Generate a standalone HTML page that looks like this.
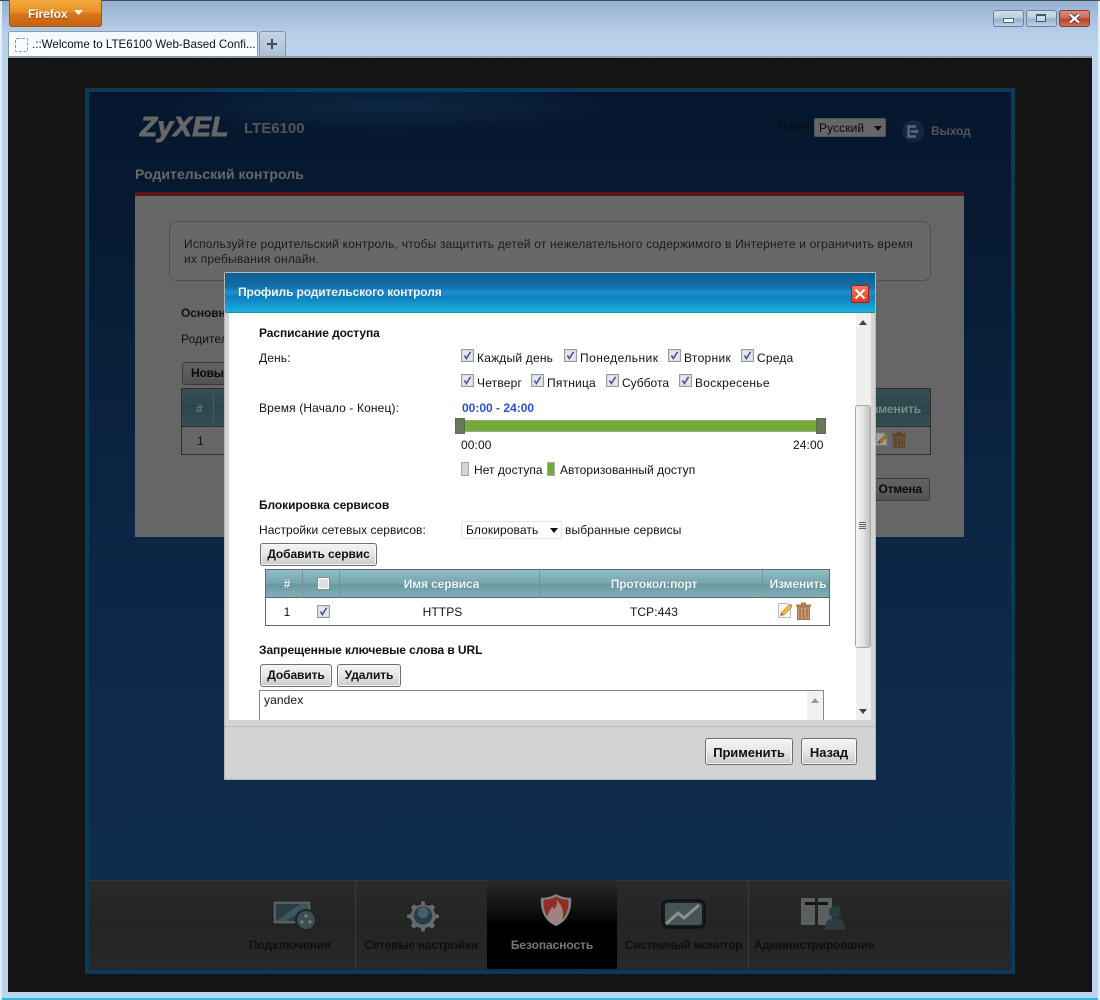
<!DOCTYPE html>
<html lang="ru"><head><meta charset="utf-8"><title>LTE6100</title>
<style>
html,body{margin:0;padding:0;width:1100px;height:1000px;overflow:hidden}
body{position:relative;background:#b8cfe8;font:12px "Liberation Sans","Noto Sans CJK SC",sans-serif;color:#111;letter-spacing:.1px}
div,span,svg{position:absolute;box-sizing:border-box}
.t{white-space:nowrap;line-height:14px}
.b{font-weight:bold;letter-spacing:-.08px}
.c{text-align:center}
.btn{border:1px solid #6e6e6e;border-radius:3px;background:linear-gradient(#f4f4f4,#e6e6e6 50%,#c9c9c9);font-weight:bold;text-align:center;line-height:21px;color:#111;white-space:nowrap;box-shadow:inset 0 0 0 1px #f6f6f6;letter-spacing:-.08px}
.dbtn{border:1px solid #3a3a3a;border-radius:3px;background:linear-gradient(#626262,#5c5c5c 50%,#525252);font-weight:bold;text-align:center;line-height:21px;color:#0a0a0a;white-space:nowrap;overflow:hidden;letter-spacing:-.2px}
.wb{top:10px;height:17px;width:31px;border:1px solid #6e8097;border-radius:3px;background:linear-gradient(#d0deee,#b9cde2 48%,#96b0cc 52%,#bcd0e5)}
.th{color:#f2f5f5;font-weight:bold;text-align:center;text-shadow:0 0 1px #4a7078;letter-spacing:-.12px}
.nav{color:#0e0e0e;font-weight:bold;text-align:center;letter-spacing:-.22px}
</style></head><body>
<svg width="0" height="0" style="display:none"><defs>
<symbol id="ck" viewBox="0 0 13 13"><rect x=".5" y=".5" width="12" height="12" fill="#d8dbe3" stroke="#9a9a9a"/><rect x="2" y="2" width="9" height="9" fill="#e6e8ee"/><path d="M3.4 6.5l2 3L9.6 2.8" fill="none" stroke="#44569e" stroke-width="1.6"/></symbol>
<symbol id="pen" viewBox="0 0 16 17"><path d="M1.5 1.5h9l3 3v11h-12z" fill="#f6f6f6" stroke="#bdbdbd"/><path d="M3.5 13.5l1-3 8-8 2.4 2.4-8 8z" fill="#f4bf2e" stroke="#b57c15" stroke-width=".6"/><path d="M3.5 13.5l1-3 2.2 2.2z" fill="#c8452b"/><path d="M12.5 2.5l1-1 2 2-1 1.2z" fill="#999"/></symbol>
<symbol id="tr" viewBox="0 0 15 18"><path d="M0 2.5h15v2H0zM5 .5h5v2H5z" fill="#b07a50"/><path d="M1.5 5h12v12.5h-12z" fill="#c99a6f" stroke="#a87249"/><path d="M4 6.5v10M7.5 6.5v10M11 6.5v10" stroke="#9a6a42" stroke-width="1.2"/></symbol>
</defs></svg>

<!-- browser chrome -->
<div style="left:0;top:0;width:1100px;height:58px;background:linear-gradient(#97b1cf,#b9d0ea 60%,#bcd3ec);border-top:1px solid #3d4a58"></div>
<div style="left:0;top:58px;width:8px;height:942px;background:#bcd3ec"></div>
<div style="left:1092px;top:58px;width:8px;height:942px;background:#bcd3ec"></div>
<div style="left:0;top:992px;width:1100px;height:8px;background:#bcd5ef;border-bottom:2px solid #33b8dc"></div>
<div style="left:0;top:1px;width:2px;height:999px;background:#e4eef8"></div>
<div style="left:1098px;top:1px;width:2px;height:999px;background:#e4eef8"></div>

<div style="left:9px;top:0;width:93px;height:27px;border:1px solid #9a5a1c;border-top:0;border-radius:0 0 3px 3px;background:linear-gradient(#f3a93f,#e98f26 45%,#d8741b 55%,#c7610f)"></div>
<div class="t b" style="left:28px;top:7px;color:#fff;font-size:12px;text-shadow:0 1px 1px #8a4a0f">Firefox</div>
<svg style="left:74px;top:10px" width="9" height="5"><path d="M0 0h9L4.5 5z" fill="#fff"/></svg>

<div style="left:8px;top:31px;width:250px;height:28px;background:linear-gradient(#f3f7fb,#fff);border:1px solid #8b9cb0;border-bottom:0;border-radius:3px 3px 0 0"></div>
<div style="left:15px;top:38px;width:13px;height:14px;border:1px dashed #8a8f98;border-radius:2px"></div>
<div class="t" style="left:32px;top:38px;font-size:11.6px;letter-spacing:0;color:#111">.::Welcome to LTE6100 Web-Based Confi...</div>
<div style="left:259px;top:31px;width:27px;height:27px;background:linear-gradient(#c6d5e6,#a9bdd3);border:1px solid #8497ad;border-bottom:0;border-radius:3px 3px 0 0"></div>
<svg style="left:266px;top:38px" width="12" height="12"><path d="M6 1v10M1 6h10" stroke="#3e4a58" stroke-width="2"/></svg>
<div style="left:8px;top:56px;width:1084px;height:2px;background:#8c9bab"></div>

<div class="wb" style="left:993px"></div>
<div style="left:1003px;top:18px;width:11px;height:5px;background:#f2f6fa;border:1px solid #55687d"></div>
<div class="wb" style="left:1026px"></div>
<div style="left:1036px;top:14px;width:10px;height:8px;border:1px solid #44566b;border-top-width:2px;background:#c8d8e8"></div>
<div class="wb" style="left:1059px;border-color:#8c3b33;background:linear-gradient(#dc8f80,#cc6a58 48%,#b93f2d 52%,#d0705c)"></div>
<svg style="left:1068px;top:13px" width="13" height="11"><path d="M2 1.5l9 8M11 1.5l-9 8" stroke="#4b2a28" stroke-width="4"/><path d="M2 1.5l9 8M11 1.5l-9 8" stroke="#fff" stroke-width="2.4"/></svg>

<!-- dark page bg -->
<div style="left:8px;top:58px;width:1084px;height:934px;background-color:#141414;background-image:repeating-linear-gradient(45deg,#181818 0 1px,#121212 1px 3px)"></div>

<!-- router panel -->
<div style="left:85px;top:88px;width:930px;height:886px;border:4px solid #0b3a56;background:linear-gradient(#06172f,#071a32 15%,#0a2340 40%,#0e2b4c 75%,#0f2c4d)"></div>
<div style="left:89px;top:92px;width:800px;height:90px;background:radial-gradient(ellipse 230px 26px at 300px 14px,rgba(40,100,140,.2),rgba(0,0,0,0))"></div>

<div class="t b" style="left:140px;top:109px;font-size:28px;line-height:36px;font-style:italic;color:#666;letter-spacing:.3px;-webkit-text-stroke:1px #666">ZyXEL</div>
<div class="t b" style="left:244px;top:121px;font-size:15px;line-height:16px;color:#555;letter-spacing:0">LTE6100</div>
<div class="t b" style="left:135px;top:167px;font-size:14px;color:#676767;letter-spacing:.05px">Родительский контроль</div>
<div class="t" style="left:778px;top:119px;color:#0c0c0c">Язык:</div>
<div style="left:814px;top:118px;width:72px;height:19px;background:#666;border:1px solid #555;border-radius:2px"></div>
<div class="t" style="left:819px;top:121px;color:#0a0a0a">Русский</div>
<svg style="left:874px;top:126px" width="8" height="5"><path d="M0 0h8L4 5z" fill="#0a0a0a"/></svg>
<div style="left:902px;top:120px;width:22px;height:22px;border-radius:50%;background:#122646"></div>
<svg style="left:907px;top:125px" width="14" height="13"><path d="M9 1.5H1.5v10H9M9 6.5H3.5" fill="none" stroke="#666" stroke-width="2.4"/><path d="M9 4l3 2.5L9 9z" fill="#666"/></svg>
<div class="t b" style="left:931px;top:124px;color:#555">Выход</div>

<!-- grey page -->
<div style="left:135px;top:192px;width:829px;height:345px;background:#666;border-top:4px solid #5d1414"></div>
<div style="left:169px;top:221px;width:762px;height:60px;border:1px solid #505050;border-radius:8px;background:#686868"></div>
<div class="t" style="left:184px;top:237px;color:#1a1a1a;letter-spacing:.19px">Используйте родительский контроль, чтобы защитить детей от нежелательного содержимого в Интернете и ограничить время</div>
<div class="t" style="left:184px;top:252px;color:#1a1a1a;letter-spacing:.2px">их пребывания онлайн.</div>
<div class="t b" style="left:181px;top:306px;color:#111">Основные</div>
<div class="t" style="left:181px;top:332px;color:#111">Родительский</div>
<div class="dbtn" style="left:182px;top:362px;width:60px;height:23px;padding-left:8px;text-align:left">Новый</div>
<div style="left:181px;top:388px;width:750px;height:67px;border:1px solid #2e2e2e"></div>
<div style="left:182px;top:389px;width:748px;height:38px;background:linear-gradient(#365054,#2c464b 50%,#344e52);border-bottom:1px solid #2e2e2e"></div>
<div style="left:213px;top:389px;width:1px;height:38px;background:#555"></div>
<div class="t b" style="left:196px;top:402px;color:#66787b">#</div>
<div class="t" style="left:197px;top:434px;color:#111">1</div>
<div class="t b" style="left:864px;top:402px;color:#7d8a8c">Изменить</div>
<svg style="left:875px;top:431px;filter:brightness(.65)" width="14" height="16"><use href="#pen"/></svg>
<svg style="left:892px;top:431px;filter:brightness(.55)" width="14" height="17"><use href="#tr"/></svg>
<div class="dbtn" style="left:860px;top:478px;width:70px;height:23px;text-align:right;padding-right:7px">Отмена</div>

<!-- nav -->
<div style="left:90px;top:880px;width:920px;height:89px;background:linear-gradient(#2a2a2a,#242424 50%,#282828);border-top:1px solid #363636"></div>
<div style="left:355px;top:880px;width:1px;height:89px;background:#3a3a3a"></div>
<div style="left:748px;top:880px;width:1px;height:89px;background:#3a3a3a"></div>
<div style="left:487px;top:880px;width:130px;height:89px;background:linear-gradient(#2a2a2a,#060606 46%,#000 47%)"></div>

<svg style="left:271px;top:900px;opacity:.8" width="48" height="32"><rect x="2" y="1" width="38" height="23" rx="2" fill="#666e70" stroke="#1c1c1c"/><path d="M5 4h32v17H5z" fill="#28444b"/><path d="M5 21L29 4h8v4L15 21z" fill="#42626a"/><circle cx="35" cy="20" r="11" fill="#1a2426"/><circle cx="35" cy="20" r="9" fill="#47595c"/><circle cx="35" cy="16" r="1.6" fill="#8a9a9c"/><circle cx="31" cy="22" r="1.6" fill="#8a9a9c"/><circle cx="39" cy="22" r="1.6" fill="#8a9a9c"/></svg>
<svg style="left:404px;top:899px;opacity:.8" width="38" height="33" viewBox="0 0 40 36"><path d="M18 2h4l1 4 4 1 3-2 4 4-2 3 2 4 4 1v4l-4 1-2 4 2 3-4 4-3-2-4 1-1 4h-4l-1-4-4-1-3 2-4-4 2-3-2-4-4-1v-4l4-1 2-4-2-3 4-4 3 2 4-1z" fill="#747d80" stroke="#1e1e1e"/><circle cx="20" cy="18" r="10" fill="#2c4450"/><circle cx="20" cy="15" r="6" fill="#4f6f7b"/></svg>
<svg style="left:536px;top:893px" width="40" height="34" viewBox="0 0 36 36"><path d="M18 1c5 3 10 4 16 4 1 13-4 25-16 30C6 30 1 18 2 5c6 0 11-1 16-4z" fill="#7f8587"/><path d="M18 4c4 2 9 3 13 3 1 11-3 21-13 26C8 28 4 18 5 7c4 0 9-1 13-3z" fill="#8f2c25"/><path d="M9 28c-1-6 3-9 5-14 1 3 3 3 4 0 2-3 1-5 0-7 5 4 9 11 7 21-2 3-4 4-7 6-4-1-7-3-9-6z" fill="#9d8481"/></svg>
<svg style="left:661px;top:899px;opacity:.8" width="46" height="30"><rect x="1" y="1" width="43" height="28" rx="6" fill="#0d1d20" stroke="#000"/><rect x="4" y="4" width="37" height="22" rx="3" fill="#4f6062"/><path d="M5 25L17 14l6 5 15-13" fill="none" stroke="#a8a8a8" stroke-width="3"/></svg>
<svg style="left:801px;top:897px;opacity:.85" width="46" height="36"><path d="M0 1h31v27H0z" fill="#666a6a"/><path d="M4 5h23v3H4z" fill="#111"/><path d="M14 1h3v27h-3z" fill="#222"/><circle cx="34" cy="15" r="6" fill="#2a4245"/><path d="M24 33c0-9 4-12 10-12s10 3 10 12z" fill="#2a4245"/></svg>

<div class="t nav" style="left:225px;top:938px;width:130px;letter-spacing:0">Подключения</div>
<div class="t nav" style="left:356px;top:938px;width:130px">Сетевые настройки</div>
<div class="t nav" style="left:487px;top:938px;width:130px;color:#787878;letter-spacing:-.08px">Безопасность</div>
<div class="t nav" style="left:618px;top:938px;width:131px;letter-spacing:-.35px">Системный монитор</div>
<div class="t nav" style="left:749px;top:938px;width:130px">Администрирование</div>

<!-- modal -->
<div style="left:224px;top:272px;width:652px;height:508px;background:#d3d3d3;border:1px dotted #999"></div>
<div style="left:225px;top:273px;width:650px;height:40px;background:linear-gradient(#0b5f95,#126ea6 35%,#1b8fd2 50%,#0f80be 62%,#18b2de);border-bottom:1px solid #2b8a9f"></div>
<div class="t b" style="left:238px;top:285px;color:#f4f8fb;text-shadow:0 0 1px #0c4f7c;letter-spacing:-.12px">Профиль родительского контроля</div>
<div style="left:851px;top:285px;width:18px;height:18px;background:linear-gradient(#f6785c,#e23a22);border:1px solid #a81c10;border-radius:2px"></div>
<svg style="left:854px;top:288px" width="12" height="12"><path d="M1.5 1.5l9 9M10.5 1.5l-9 9" stroke="#fff" stroke-width="2"/></svg>

<div style="left:229px;top:313px;width:642px;height:407px;background:#fff"></div>
<div style="left:856px;top:313px;width:15px;height:407px;background:#efefef"></div>
<svg style="left:859px;top:320px" width="8" height="5"><path d="M4 0l4 5H0z" fill="#444"/></svg>
<svg style="left:859px;top:709px" width="8" height="5"><path d="M0 0h8L4 5z" fill="#444"/></svg>
<div style="left:855px;top:405px;width:16px;height:243px;border:1px solid #aaa;border-radius:3px;background:linear-gradient(90deg,#f4f4f4,#e4e4e4 50%,#bdbdbd)"></div>
<svg style="left:859px;top:522px" width="8" height="8"><path d="M0 .5h7M0 2.5h7M0 4.5h7M0 6.5h7" stroke="#666"/></svg>

<div class="t b" style="left:259px;top:326px">Расписание доступа</div>
<div class="t" style="left:259px;top:351px">День:</div>
<svg style="left:461px;top:349px" width="13" height="13"><use href="#ck"/></svg><div class="t" style="left:477px;top:351px;letter-spacing:.2px">Каждый день</div>
<svg style="left:564px;top:349px" width="13" height="13"><use href="#ck"/></svg><div class="t" style="left:580px;top:351px;letter-spacing:.45px">Понедельник</div>
<svg style="left:668px;top:349px" width="13" height="13"><use href="#ck"/></svg><div class="t" style="left:684px;top:351px;letter-spacing:.3px">Вторник</div>
<svg style="left:741px;top:349px" width="13" height="13"><use href="#ck"/></svg><div class="t" style="left:757px;top:351px;letter-spacing:.2px">Среда</div>
<svg style="left:461px;top:374px" width="13" height="13"><use href="#ck"/></svg><div class="t" style="left:477px;top:376px;letter-spacing:.2px">Четверг</div>
<svg style="left:531px;top:374px" width="13" height="13"><use href="#ck"/></svg><div class="t" style="left:547px;top:376px;letter-spacing:.2px">Пятница</div>
<svg style="left:606px;top:374px" width="13" height="13"><use href="#ck"/></svg><div class="t" style="left:622px;top:376px;letter-spacing:0">Суббота</div>
<svg style="left:679px;top:374px" width="13" height="13"><use href="#ck"/></svg><div class="t" style="left:695px;top:376px;letter-spacing:.3px">Воскресенье</div>

<div class="t" style="left:259px;top:401px;letter-spacing:.13px">Время (Начало - Конец):</div>
<div class="t b" style="left:462px;top:401px;color:#2a4fd0;letter-spacing:0">00:00 - 24:00</div>
<div style="left:458px;top:420px;width:364px;height:12px;background:#73ab37;border:1px solid #a0a0a0;border-width:1px 0"></div>
<div style="left:455px;top:418px;width:10px;height:16px;background:#66795a;border:1px solid #5a6b50"></div>
<div style="left:816px;top:418px;width:10px;height:16px;background:#66795a;border:1px solid #5a6b50"></div>
<div class="t" style="left:461px;top:438px">00:00</div>
<div class="t" style="left:793px;top:438px">24:00</div>
<div style="left:461px;top:462px;width:8px;height:14px;background:#d4d4d4;border:1px solid #a8a8a8"></div>
<div class="t" style="left:474px;top:463px;letter-spacing:.03px">Нет доступа</div>
<div style="left:547px;top:462px;width:8px;height:14px;background:#73ab37;border:1px solid #a8a8a8"></div>
<div class="t" style="left:560px;top:463px;letter-spacing:.05px">Авторизованный доступ</div>

<div class="t b" style="left:259px;top:498px">Блокировка сервисов</div>
<div class="t" style="left:259px;top:523px;letter-spacing:.04px">Настройки сетевых сервисов:</div>
<div style="left:461px;top:521px;width:101px;height:18px;border:1px solid #e2e2ea;border-radius:2px;background:#fff"></div>
<div class="t" style="left:466px;top:523px">Блокировать</div>
<svg style="left:550px;top:528px" width="8" height="5"><path d="M0 0h8L4 5z" fill="#111"/></svg>
<div class="t" style="left:565px;top:523px;letter-spacing:.14px">выбранные сервисы</div>
<div class="btn" style="left:260px;top:543px;width:117px;height:23px">Добавить сервис</div>

<div style="left:265px;top:569px;width:565px;height:57px;border:1px solid #666;background:#fff"></div>
<div style="left:266px;top:570px;width:563px;height:28px;background:linear-gradient(#90bdc3,#79a8b0 45%,#6b99a3 55%,#7fb0b8);border-bottom:1px solid #666"></div>
<div style="left:302px;top:570px;width:1px;height:28px;background:#7f9095"></div>
<div style="left:339px;top:570px;width:1px;height:28px;background:#7f9095"></div>
<div style="left:539px;top:570px;width:1px;height:28px;background:#7f9095"></div>
<div style="left:762px;top:570px;width:1px;height:28px;background:#7f9095"></div>
<div class="t th" style="left:266px;top:577px;width:42px">#</div>
<div style="left:317px;top:577px;width:13px;height:13px;background:#e0e0e0;border:1px solid #8a8a8a;box-shadow:inset 0 0 0 1px #fff"></div>
<div class="t th" style="left:340px;top:577px;width:203px">Имя сервиса</div>
<div class="t th" style="left:540px;top:577px;width:228px">Протокол:порт</div>
<div class="t th" style="left:763px;top:577px;width:70px">Изменить</div>
<div class="t c" style="left:266px;top:605px;width:42px">1</div>
<svg style="left:317px;top:605px" width="13" height="13"><use href="#ck"/></svg>
<div class="t c" style="left:340px;top:605px;width:205px">HTTPS</div>
<div class="t c" style="left:540px;top:605px;width:228px">TCP:443</div>
<svg style="left:777px;top:602px" width="16" height="17"><use href="#pen"/></svg>
<svg style="left:796px;top:602px" width="15" height="18"><use href="#tr"/></svg>

<div class="t b" style="left:259px;top:643px">Запрещенные ключевые слова в URL</div>
<div class="btn" style="left:260px;top:664px;width:72px;height:23px">Добавить</div>
<div class="btn" style="left:337px;top:664px;width:64px;height:23px">Удалить</div>
<div style="left:259px;top:690px;width:565px;height:30px;border:1px solid #888;border-bottom:0;background:#fff"></div>
<div style="left:807px;top:691px;width:16px;height:29px;background:#f1f1f1"></div>
<svg style="left:811px;top:698px" width="8" height="5"><path d="M4 0l4 5H0z" fill="#999"/></svg>
<div class="t" style="left:264px;top:693px">yandex</div>

<div style="left:225px;top:720px;width:650px;height:59px;background:#d3d3d3"></div>
<div style="left:225px;top:726px;width:650px;height:0;border-top:1px dotted #a5a5a5"></div>
<div class="btn" style="left:705px;top:738px;width:88px;height:27px;line-height:27px;font-size:13px">Применить</div>
<div class="btn" style="left:801px;top:738px;width:56px;height:27px;line-height:27px;font-size:13px">Назад</div>
</body></html>
